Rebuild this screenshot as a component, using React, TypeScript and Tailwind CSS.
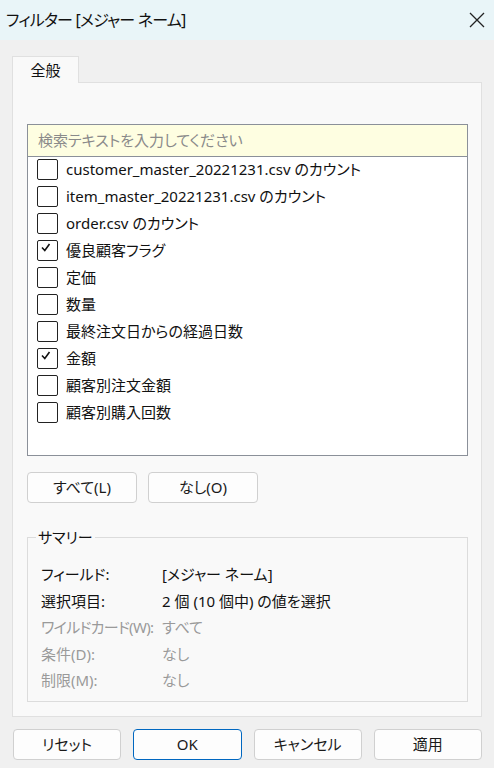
import React from "react";

const font = {
  fontFamily: '"Segoe UI", "Noto Sans", "Noto Sans CJK JP", sans-serif',
};

const items: { label: string; checked: boolean }[] = [
  { label: "customer_master_20221231.csv のカウント", checked: false },
  { label: "item_master_20221231.csv のカウント", checked: false },
  { label: "order.csv のカウント", checked: false },
  { label: "優良顧客フラグ", checked: true },
  { label: "定価", checked: false },
  { label: "数量", checked: false },
  { label: "最終注文日からの経過日数", checked: false },
  { label: "金額", checked: true },
  { label: "顧客別注文金額", checked: false },
  { label: "顧客別購入回数", checked: false },
];

function Check({ checked }: { checked: boolean }) {
  return (
    <div className="w-[21px] h-[21px] border border-[#222] rounded-[2px] bg-white relative shrink-0">
      {checked && (
        <svg className="absolute left-[3px] top-[2px]" width="10" height="9" viewBox="0 0 10 9">
          <path d="M1 4.5 L3.8 7.5 L8.5 1" fill="none" stroke="#111" strokeWidth="1.6" />
        </svg>
      )}
    </div>
  );
}

function Btn({ children, primary }: { children: React.ReactNode; primary?: boolean }) {
  return (
    <div
      className={`h-[31px] flex items-center justify-center rounded-[4px] bg-[#fdfdfd] text-[15px] text-[#1a1a1a] border ${
        primary ? "border-[#0067c0]" : "border-[#d0d0d0]"
      }`}
    >
      {children}
    </div>
  );
}

const rows: [string, string, boolean, boolean][] = [
  ["フィールド:", "[メジャー ネーム]", false, false],
  ["選択項目:", "2 個 (10 個中) の値を選択", false, false],
  ["ワイルドカード(W):", "すべて", true, true],
  ["条件(D):", "なし", true, false],
  ["制限(M):", "なし", true, false],
];

export default function App() {
  return (
    <div
      className="w-[494px] h-[768px] bg-[#f0f0f0] flex flex-col [font-feature-settings:'palt']"
      style={font}
    >
      {/* title bar */}
      <div className="h-[40px] bg-[#e9f5f8] flex items-center justify-between pl-[6px] pr-[9px] shrink-0">
        <span className="text-[16px] text-[#111] tracking-[-0.8px]">フィルター [メジャー ネーム]</span>
        <svg width="16" height="16" viewBox="0 0 16 16">
          <path d="M1 1 L15 15 M15 1 L1 15" stroke="#222" strokeWidth="1.3" />
        </svg>
      </div>

      <div className="flex flex-col px-[12px] pt-[16px]">
        {/* tab */}
        <div className="flex">
          <div className="w-[67px] h-[27px] bg-[#f9f9f9] border border-b-0 border-[#e0e0e0] flex items-center justify-center text-[15px] text-[#111] relative z-10 -mb-px">
            全般
          </div>
        </div>
        {/* panel */}
        <div className="h-[635px] bg-[#f9f9f9] border border-[#e0e0e0] flex flex-col pl-[14px] pr-[13px] pt-[41px]">
          {/* list */}
          <div className="h-[332px] border border-[#8b9099] bg-white flex flex-col">
            <div className="h-[32px] bg-[#fefee1] border-b border-[#8b9099] flex items-center pl-[10px] text-[15px] text-[#8a8a8a]">
              検索テキストを入力してください
            </div>
            <div className="flex flex-col pt-[2px] pl-[9px] gap-[6px]">
              {items.map((it) => (
                <div key={it.label} className="flex items-center h-[21px] gap-[8px]">
                  <Check checked={it.checked} />
                  <span className="text-[15px] text-[#111] whitespace-nowrap">{it.label}</span>
                </div>
              ))}
            </div>
          </div>

          {/* select buttons */}
          <div className="flex gap-[11px] mt-[16px]">
            <div className="w-[110px]">
              <Btn>すべて(L)</Btn>
            </div>
            <div className="w-[110px]">
              <Btn>なし(O)</Btn>
            </div>
          </div>

          {/* summary group */}
          <div className="mt-[34px] h-[165px] border border-[#dcdcdc] relative flex flex-col pl-[13px] pt-[23px] text-[15px]">
            <span className="absolute left-[8px] -top-[12px] px-[2px] bg-[#f9f9f9] text-[#111]">サマリー</span>
            {rows.map(([k, v, dim, tight]) => (
              <div
                key={k}
                className={`flex h-[26.5px] items-center ${dim ? "text-[#9a9a9a]" : "text-[#111]"}`}
              >
                <span className={`w-[121px] whitespace-nowrap ${tight ? "tracking-[-0.7px]" : ""}`}>{k}</span>
                <span className="whitespace-nowrap">{v}</span>
              </div>
            ))}
          </div>
        </div>

        {/* bottom buttons */}
        <div className="grid grid-cols-4 gap-[12px] mt-[12px] pl-px">
          <Btn>リセット</Btn>
          <Btn primary>OK</Btn>
          <Btn>キャンセル</Btn>
          <Btn>適用</Btn>
        </div>
      </div>
    </div>
  );
}
